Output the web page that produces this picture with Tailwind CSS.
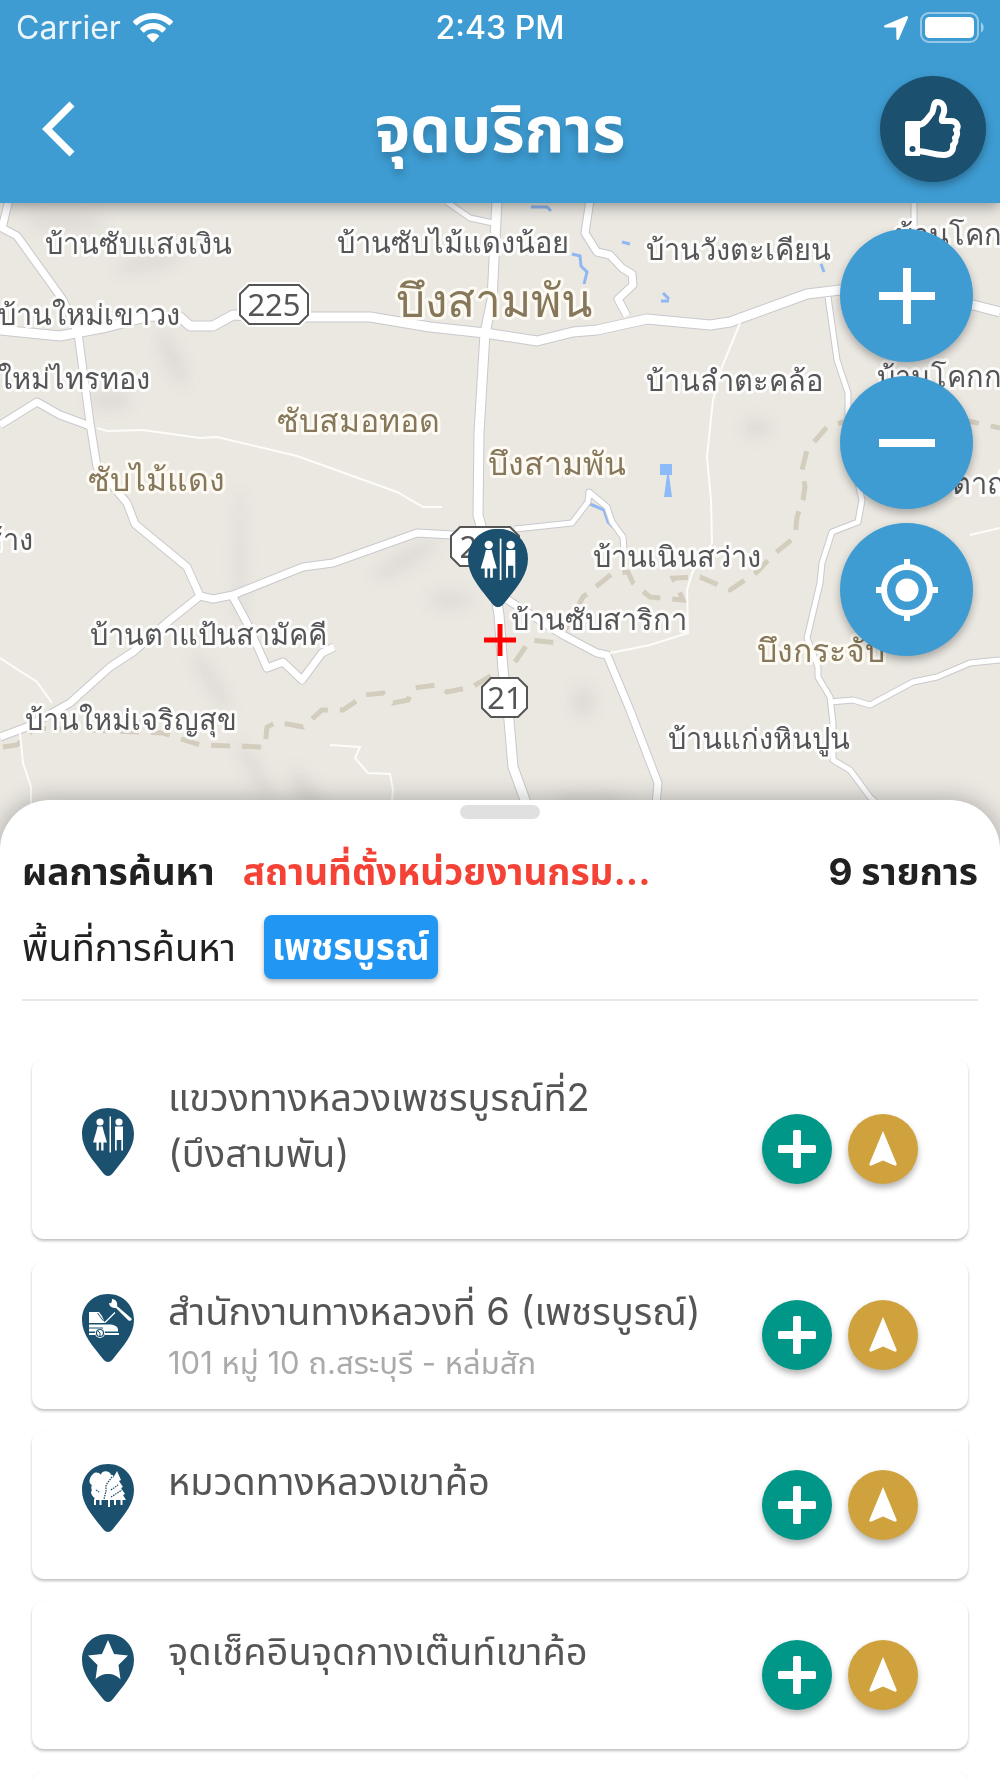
<!DOCTYPE html>
<html lang="th">
<head>
    <meta charset="UTF-8">
    <meta name="viewport" content="width=device-width, initial-scale=1.0">
    <title>จุดบริการ</title>
    <script src="https://cdn.jsdelivr.net/npm/@tailwindcss/browser@4"></script>
</head>
<body class="h-screen overflow-hidden bg-white font-['Inter','Noto_Sans_Thai','Noto_Sans',sans-serif] text-[#212121]">

    <!-- icon sprites -->
    <svg class="hidden" aria-hidden="true">
        <symbol id="pin" viewBox="0 0 52 68">
            <path fill="#1b506e" d="M26 0C11 0 0 11 0 26c0 15 11 26 21 39 3 4 7 4 10 0 10-13 21-24 21-39C52 11 41 0 26 0z"/>
        </symbol>
        <symbol id="pin-restroom" viewBox="0 0 52 68">
            <use href="#pin"/>
            <g fill="#fff">
                <circle cx="18" cy="14" r="3.6"/>
                <path d="M15.500 18.500h5l1.500 6 3 10h-3.500v8h-2.300v-8h-2.400v8h-2.300v-8H11l3-10z"/>
                <path d="M27.500 8.500h1.500v36h-1.500z"/>
                <circle cx="37" cy="14" r="3.600"/>
                <path d="M33 18.500h8v24h-1.700V32h-4.600v10.500H33z"/>
            </g>
        </symbol>
        <symbol id="pin-repair" viewBox="0 0 52 68">
            <use href="#pin"/>
            <g fill="#fff">
                <path d="M7 18h10l3 4 3 7H7z"/>
                <path d="M7 30.500h20c5 0 9 2 9 5v2H7zM7 39h6.500v2H7zM22.500 39H37v2H22.500z"/>
                <circle cx="18" cy="39" r="5"/>
                <path d="M27 9c2 1 3 0 3-4 4 0 6 4 5 7l14 12c2 2-1 4-3 2L34 14c-4 0-7-2-7-5z"/>
            </g>
            <path d="M14.500 19.500l6 6.500M23 28.500l10-10M7 34.500h12" stroke="#fff" stroke-width="1.300" fill="none"/>
            <path d="M15.500 19l6 8M7 34h14" stroke="#1b506e" stroke-width="1"/>
            <circle cx="18" cy="39" r="3.500" fill="none" stroke="#1b506e" stroke-width="1.200"/>
            <path d="M16 37l2 2v3" stroke="#1b506e" stroke-width="1" fill="none"/>
        </symbol>
        <symbol id="pin-park" viewBox="0 0 52 68">
            <use href="#pin"/>
            <path fill="#fff" d="M11 10c3-3 7-1 8 1 0-5 9-5 10 0 1-1 3 0 2 3l4-7 4 9-2 1 4 6-2 1 4 6-2 1 3 5H13c0-3-4-4-4-8 2-2-1-4 1-7-3-1-4-6 1-11z"/>
            <path stroke="#fff" stroke-width="2" d="M13 35v6M18.500 35v6M27 35v8M33 35v6M39.500 35v6"/>
            <path stroke="#1b506e" stroke-width="1.300" stroke-dasharray="1.500 1" fill="none" d="M30 13l-6 8v6l-2 8M29 26l7-5M29 33l11-7M14 26l3 2"/>
        </symbol>
        <symbol id="pin-star" viewBox="0 0 52 68">
            <use href="#pin"/>
            <path fill="#fff" d="M26 6l6 14 14 1.500L36.500 31l2 14.500C33 38 19 38 13.500 45.500L15.500 31 6 21.500 20 20z"/>
        </symbol>
        <symbol id="add" viewBox="0 0 38 38">
            <path fill="#fff" d="M16.500 0h5a1.500 1.500 0 0 1 1.500 1.500V15h13.500a1.500 1.500 0 0 1 1.500 1.500v5a1.500 1.500 0 0 1-1.500 1.500H23v13.500a1.500 1.500 0 0 1-1.500 1.500h-5a1.500 1.500 0 0 1-1.500-1.500V23H1.500A1.500 1.500 0 0 1 0 21.500v-5A1.500 1.500 0 0 1 1.500 15H15V1.500A1.500 1.500 0 0 1 16.500 0z"/>
        </symbol>
        <symbol id="navigate" viewBox="0 0 28 36">
            <path fill="#fff" d="M14 0L27.500 32.500c.6 1.500-.5 2.500-2 2L14 29.500 2.500 34.500c-1.500.5-2.600-.5-2-2z"/>
        </symbol>
    </svg>

    <div class="flex h-full flex-col">
        <!-- header -->
        <header class="relative z-10 shrink-0 bg-[#3e9cd2] text-white shadow-[0_3px_14px_rgba(0,0,0,0.4)]">
            <div class="grid h-[55px] grid-cols-3 items-center px-4">
                <div class="flex items-center gap-3">
                    <span class="text-[32px] leading-8 text-white/90">Carrier</span>
                    <svg class="h-[30px] w-10" viewBox="0 0 40 30" fill="#fff">
                        <path d="M20 0C12.500 0 5.500 3 .3 8c-.4.400-.4 1 0 1.400l2.600 2.700c.4.400 1 .4 1.400 0A22.500 22.500 0 0 1 20 6c6 0 11.500 2.300 15.700 6.100.4.400 1 .4 1.400 0l2.600-2.700c.4-.4.4-1 0-1.400C34.500 3 27.500 0 20 0z"/>
                        <path d="M20 10c-4.900 0-9.300 1.900-12.600 5-.4.400-.4 1 0 1.400l2.700 2.800c.4.400 1 .4 1.400 0 2.300-2 5.200-3.200 8.500-3.200s6.200 1.200 8.500 3.200c.4.400 1 .4 1.400 0l2.700-2.800c.4-.4.4-1 0-1.400-3.300-3.100-7.700-5-12.600-5z"/>
                        <path d="M20 20.200c-2.200 0-4.200.8-5.700 2.100-.4.400-.4 1 0 1.400l5 5.200c.4.400 1 .4 1.400 0l5-5.200c.4-.4.4-1 0-1.400-1.500-1.300-3.500-2.100-5.700-2.100z"/>
                    </svg>
                </div>
                <span class="text-center text-[32px] font-medium leading-8">2:43 PM</span>
                <div class="flex items-center justify-end gap-3">
                    <svg class="h-6 w-6" viewBox="0 0 24 24" fill="#fff"><path d="M22 .2L.8 9.300c-1.300.6-1 2.200.4 2.200l11 .1.200 11.200c0 1.400 1.800 1.700 2.400.4L23.900 2C24.400.8 23.200-.3 22 .2z"/></svg>
                    <svg class="h-[31px] w-16" viewBox="0 0 64 31">
                        <rect x="1" y="1" width="57" height="29" rx="8" fill="none" stroke="#fff" stroke-opacity=".45" stroke-width="2"/>
                        <rect x="5" y="5" width="49" height="21" rx="4.500" fill="#fff"/>
                        <path d="M61 10.500c3.500 1.500 3.500 8.500 0 10z" fill="#fff" fill-opacity=".5"/>
                    </svg>
                </div>
            </div>
            <div class="grid h-[148px] grid-cols-[1fr_auto_1fr] items-center px-[14px]">
                <button type="button" aria-label="กลับ" class="w-20 pl-[26px]">
                    <svg class="h-14 w-9" viewBox="0 0 36 56"><path d="M32 3L7 28l25 25" fill="none" stroke="#fff" stroke-width="7"/></svg>
                </button>
                <h1 class="text-[64px] font-bold leading-[80px] text-shadow-[0_6px_8px_rgba(0,0,0,0.2)]">จุดบริการ</h1>
                <button type="button" aria-label="ถูกใจ" class="flex size-[106px] items-center justify-center justify-self-end rounded-full bg-[#1b506e] shadow-[0_4px_8px_rgba(0,0,0,0.3)]">
                    <svg class="h-[60px] w-14" viewBox="0 0 56 60">
                        <path fill="#fff" fill-rule="evenodd" d="M2 22h13v35H2a2 2 0 0 1-2-2V24a2 2 0 0 1 2-2zM7.500 47a3 3 0 1 0 0 6 3 3 0 0 0 0-6z"/>
                        <path fill="none" stroke="#fff" stroke-width="6" stroke-linejoin="round" d="M13 26c7 0 11-9 14-12 2-3 1-11 5-11 5 0 8 4 7 10-1 4-3 6-2 9h9c7 0 8 7 5 9 2 3 1 7-1 8 1 3 0 6-2 7 1 6-3 10-9 10-12 0-13-3-26-4"/>
                    </svg>
                </button>
            </div>
        </header>

        <!-- map -->
        <main class="relative h-[647px] shrink-0 overflow-hidden bg-[#ebe8e2]">
            <svg class="h-full w-full" viewBox="0 203 1000 647" preserveAspectRatio="xMidYMid slice" role="img" aria-label="แผนที่">
                <defs>
                    <filter id="soft" x="-50%" y="-50%" width="200%" height="200%"><feGaussianBlur stdDeviation="7"/></filter>
                    <g id="major" fill="none" stroke-linejoin="round">
                        <path d="M0 330L60 336 107 327 150 316 180 317 190 326H213L233 315 270 317H370L430 327 485 333 537 341 573 332 597 330 647 319 710 325 730 322 807 294 840 290 900 295 973 305 1000 312"/>
                        <path d="M497 200L492 300 485 333 479 433 478 515 490 560 499 615 503 670 509 720 513 767 525 800 535 850"/>
                    </g>
                    <g id="minor" fill="none" stroke-linejoin="round">
                        <path d="M9 200L2 228 17 236 63 300 78 333 90 423 97 467 127 503 135 524 187 567 200 596 213 599 233 595 303 567 333 563 417 533 470 536"/>
                        <path d="M200 596L170 620 133 652 110 667 70 703 27 727 0 737"/>
                        <path d="M233 597L247 623 267 668 283 662 302 680 322 653 334 647"/>
                        <path d="M0 425L37 402 60 415 90 426"/>
                        <path d="M500 595L563 635 597 653 607 655 630 710 658 783 652 850"/>
                        <path d="M590 200L585 233 597 252 610 255 622 268 632 274 633 285 618 299 627 316"/>
                    </g>
                    <g id="lane" fill="none" stroke-linejoin="round">
                        <path d="M447 202L470 218 493 223"/>
                        <path d="M828 297L837 360 848 393 848 440 862 500 858 522 832 532 822 563 820 583 807 638 818 667 818 677 830 697 833 723 833 760 850 770 870 797 890 815"/>
                        <path d="M830 702L853 700 870 705 913 682 937 677 970 663 1000 660"/>
                        <path d="M515 529L572 523 588 502 589 492 607 507 612 522 623 537 624 550"/>
                        <path d="M914 200V250"/>
                    </g>
                </defs>

                <!-- terrain shading -->
                <g filter="url(#soft)" fill="#8d8c86" fill-opacity=".13">
                    <ellipse cx="150" cy="262" rx="34" ry="9" transform="rotate(-12 150 262)"/>
                    <ellipse cx="65" cy="222" rx="40" ry="9"/>
                    <ellipse cx="172" cy="358" rx="9" ry="30" transform="rotate(-25 172 358)"/>
                    <ellipse cx="110" cy="400" rx="22" ry="10"/>
                    <ellipse cx="240" cy="560" rx="5" ry="70"/>
                    <ellipse cx="212" cy="682" rx="7" ry="34" transform="rotate(-32 212 682)"/>
                    <ellipse cx="255" cy="770" rx="7" ry="32" transform="rotate(-32 255 770)"/>
                    <ellipse cx="305" cy="790" rx="10" ry="24" transform="rotate(-32 305 790)"/>
                    <ellipse cx="405" cy="560" rx="36" ry="9" transform="rotate(-30 405 560)"/>
                    <ellipse cx="450" cy="600" rx="22" ry="9"/>
                    <ellipse cx="583" cy="702" rx="12" ry="16"/>
                    <ellipse cx="757" cy="428" rx="14" ry="10"/>
                    <ellipse cx="590" cy="800" rx="36" ry="8"/>
                </g>

                <!-- district boundary -->
                <path fill="none" stroke="#d3cdbe" stroke-width="5" stroke-dasharray="19 12" d="M3 747L17 745 35 728 163 733 200 745 265 747 267 727 277 722 303 727 322 710 343 710 365 695 383 693 393 703 408 700 413 688 437 685 447 692 472 687 497 672M515 662L530 640 558 643 583 597 613 573 628 572 633 583 650 597 683 600 673 578 700 577 730 590 757 572 773 555 795 537 797 517 803 500 805 487 802 470 807 450 827 427 843 422 908 412 973 422 1000 428"/>

                <!-- water -->
                <g fill="none" stroke="#8fb8f3" stroke-width="3">
                    <path d="M531 207h16l4 4M572 254l8 2 1 10 6 6-3 12M622 242l8 2M663 293l6 6M661 301h8M821 264l3 8M590 504l14 6 4 12 6 6"/>
                </g>
                <path fill="#8dbaf8" d="M660 464h12v11h-3l3 22h-8l3-22h-7z"/>

                <!-- roads: casing first, then fill -->
                <use href="#lane" stroke="#c9c8cc" stroke-width="7"/>
                <use href="#minor" stroke="#c9c8cc" stroke-width="9"/>
                <use href="#major" stroke="#c9c8cc" stroke-width="11"/>
                <g fill="none" stroke="#fdfcf8" stroke-width="2">
                    <path d="M97 428L107 431 143 430 200 438 217 437 297 456 397 492 423 507 442 507"/>
                    <path d="M740 323L722 367 713 400 707 457 711 500 712 543 692 573 687 590 688 633 650 645 610 653"/>
                    <path d="M0 658L37 682 52 703M20 733L23 763 31 787V805M330 745L360 747 355 758 368 773 390 774 393 790 391 810M970 535L1000 528"/>
                </g>
                <use href="#lane" stroke="#fff" stroke-width="5"/>
                <use href="#minor" stroke="#fff" stroke-width="7"/>
                <use href="#major" stroke="#fff" stroke-width="9"/>

                <!-- route shields -->
                <g fill="#fff" stroke="#555" stroke-width="2">
                    <path stroke="#fff" stroke-width="6" d="M249 285h50l9 9v21l-9 9h-50l-9-9v-21z"/>
                    <path d="M249 285h50l9 9v21l-9 9h-50l-9-9v-21z"/>
                    <path d="M460 527h50l9 9v21l-9 9h-50l-9-9v-21z"/>
                    <path d="M491 678h27l9 9v21l-9 9h-27l-9-9v-21z"/>
                </g>
                <g class="font-['Noto_Sans',sans-serif]" font-size="31" fill="#555" text-anchor="middle">
                    <text x="274" y="316">225</text>
                    <text x="486" y="558">225</text>
                    <text x="505" y="709">21</text>
                </g>

                <!-- place names -->
                <g class="font-['Noto_Sans',sans-serif] [paint-order:stroke]" font-size="29" fill="#555558" stroke="#fff" stroke-opacity=".85" stroke-width="6" stroke-linejoin="round">
                    <text x="45" y="254">บ้านซับแสงเงิน</text>
                    <text x="337" y="253">บ้านซับไม้แดงน้อย</text>
                    <text x="646" y="260">บ้านวังตะเคียน</text>
                    <text x="895" y="245">บ้านโคกกรวด</text>
                    <text x="-2" y="325">บ้านใหม่เขาวง</text>
                    <text x="-2" y="389">ใหม่ไทรทอง</text>
                    <text x="646" y="391">บ้านลำตะคล้อ</text>
                    <text x="877" y="387">บ้านโคกกลาง</text>
                    <text x="952" y="494">ตาถ่าย</text>
                    <text x="-17" y="550">ช้าง</text>
                    <text x="593" y="567">บ้านเนินสว่าง</text>
                    <text x="511" y="630">บ้านซับสาริกา</text>
                    <text x="90" y="645">บ้านตาแป้นสามัคคี</text>
                    <text x="25" y="730">บ้านใหม่เจริญสุข</text>
                    <text x="668" y="749">บ้านแก่งหินปูน</text>
                </g>
                <g class="font-['Noto_Sans',sans-serif] [paint-order:stroke]" font-size="32" fill="#86775a" stroke="#fffdf5" stroke-opacity=".85" stroke-width="6" stroke-linejoin="round">
                    <text x="277" y="432">ซับสมอทอด</text>
                    <text x="88" y="491">ซับไม้แดง</text>
                    <text x="488" y="475">บึงสามพัน</text>
                    <text x="757" y="662">บึงกระจับ</text>
                    <text x="396" y="317" font-size="46">บึงสามพัน</text>
                </g>

                <!-- selected place and map centre -->
                <use href="#pin-restroom" x="468" y="527" width="60" height="82"/>
                <path d="M484 640h32M500 624v32" stroke="#f00" stroke-width="5"/>
            </svg>

            <div class="absolute right-[27px] top-[26px] flex flex-col gap-[14px]">
                <button type="button" aria-label="ขยาย" class="flex size-[133px] items-center justify-center rounded-full bg-[#3e9cd2] shadow-[0_4px_8px_rgba(0,0,0,0.3)]">
                    <svg class="size-14" viewBox="0 0 56 56" stroke="#fff" stroke-width="8"><path d="M0 28h56M28 0v56"/></svg>
                </button>
                <button type="button" aria-label="ย่อ" class="flex size-[133px] items-center justify-center rounded-full bg-[#3e9cd2] shadow-[0_4px_8px_rgba(0,0,0,0.3)]">
                    <svg class="size-14" viewBox="0 0 56 56" stroke="#fff" stroke-width="8"><path d="M0 28h56"/></svg>
                </button>
                <button type="button" aria-label="ตำแหน่งของฉัน" class="flex size-[133px] items-center justify-center rounded-full bg-[#3e9cd2] shadow-[0_4px_8px_rgba(0,0,0,0.3)]">
                    <svg class="size-16" viewBox="0 0 64 64" fill="none" stroke="#fff" stroke-width="6">
                        <circle cx="32" cy="32" r="23"/>
                        <path d="M32 1v9M32 54v9M1 32h9M54 32h9"/>
                        <circle cx="32" cy="32" r="11.500" fill="#fff" stroke="none"/>
                    </svg>
                </button>
            </div>
        </main>

        <!-- results sheet -->
        <section class="relative z-10 -mt-[50px] flex min-h-0 flex-1 flex-col overflow-hidden rounded-t-[50px] bg-white shadow-[0_0_24px_rgba(0,0,0,0.3)]">
            <div class="mx-auto mt-[5px] h-[14px] w-20 shrink-0 rounded-full bg-[#e0e0e0]"></div>

            <div class="mx-[22px] shrink-0 border-b-2 border-[#e8e8e8] pb-5 pt-[29px]">
                <div class="flex h-12 items-center text-[37px] font-bold leading-[48px]">
                    <h2>ผลการค้นหา</h2>
                    <span class="ml-7 whitespace-nowrap text-[#f44336]">สถานที่ตั้งหน่วยงานกรม...</span>
                    <span class="ml-auto">9 รายการ</span>
                </div>
                <div class="mt-[19px] flex h-16 items-center text-[38px] leading-[48px]">
                    <span>พื้นที่การค้นหา</span>
                    <button type="button" class="ml-7 h-16 rounded-lg bg-[#2196f3] px-2 text-[37px] font-bold text-white shadow-[0_3px_5px_rgba(0,0,0,0.3)]">เพชรบูรณ์</button>
                </div>
            </div>

            <ul class="flex flex-col gap-[22px] px-8 pt-[58px] text-[#555]">
                <li class="flex min-h-[148px] shrink-0 items-center rounded-xl bg-white py-[10px] pl-[50px] pr-[50px] shadow-[0_2px_3px_rgba(0,0,0,0.25)]">
                    <svg class="mb-[14px] h-[68px] w-[52px] shrink-0"><use href="#pin-restroom"/></svg>
                    <div class="ml-[34px] flex-1">
                        <h3 class="text-[38px] leading-[56px]">แขวงทางหลวงเพชรบูรณ์ที่2<br>(บึงสามพัน)</h3>
                        <p class="h-12"></p>
                    </div>
                    <div class="flex gap-4">
                        <button type="button" aria-label="เพิ่ม" class="flex size-[70px] items-center justify-center rounded-full bg-[#009688] shadow-[0_4px_6px_rgba(0,0,0,0.3)]"><svg class="size-[38px]"><use href="#add"/></svg></button>
                        <button type="button" aria-label="นำทาง" class="flex size-[70px] items-center justify-center rounded-full bg-[#cfa23d] shadow-[0_4px_6px_rgba(0,0,0,0.3)]"><svg class="h-9 w-7"><use href="#navigate"/></svg></button>
                    </div>
                </li>
                <li class="flex min-h-[148px] shrink-0 items-center rounded-xl bg-white py-[10px] pl-[50px] pr-[50px] shadow-[0_2px_3px_rgba(0,0,0,0.25)]">
                    <svg class="mb-[14px] h-[68px] w-[52px] shrink-0"><use href="#pin-repair"/></svg>
                    <div class="ml-[34px] flex-1">
                        <h3 class="text-[38px] leading-[56px]">สำนักงานทางหลวงที่ 6 (เพชรบูรณ์)</h3>
                        <p class="h-12 text-[31px] leading-[48px] text-[#aaa]">101 หมู่ 10 ถ.สระบุรี - หล่มสัก</p>
                    </div>
                    <div class="flex gap-4">
                        <button type="button" aria-label="เพิ่ม" class="flex size-[70px] items-center justify-center rounded-full bg-[#009688] shadow-[0_4px_6px_rgba(0,0,0,0.3)]"><svg class="size-[38px]"><use href="#add"/></svg></button>
                        <button type="button" aria-label="นำทาง" class="flex size-[70px] items-center justify-center rounded-full bg-[#cfa23d] shadow-[0_4px_6px_rgba(0,0,0,0.3)]"><svg class="h-9 w-7"><use href="#navigate"/></svg></button>
                    </div>
                </li>
                <li class="flex min-h-[148px] shrink-0 items-center rounded-xl bg-white py-[10px] pl-[50px] pr-[50px] shadow-[0_2px_3px_rgba(0,0,0,0.25)]">
                    <svg class="mb-[14px] h-[68px] w-[52px] shrink-0"><use href="#pin-park"/></svg>
                    <div class="ml-[34px] flex-1">
                        <h3 class="text-[38px] leading-[56px]">หมวดทางหลวงเขาค้อ</h3>
                        <p class="h-12"></p>
                    </div>
                    <div class="flex gap-4">
                        <button type="button" aria-label="เพิ่ม" class="flex size-[70px] items-center justify-center rounded-full bg-[#009688] shadow-[0_4px_6px_rgba(0,0,0,0.3)]"><svg class="size-[38px]"><use href="#add"/></svg></button>
                        <button type="button" aria-label="นำทาง" class="flex size-[70px] items-center justify-center rounded-full bg-[#cfa23d] shadow-[0_4px_6px_rgba(0,0,0,0.3)]"><svg class="h-9 w-7"><use href="#navigate"/></svg></button>
                    </div>
                </li>
                <li class="flex min-h-[148px] shrink-0 items-center rounded-xl bg-white py-[10px] pl-[50px] pr-[50px] shadow-[0_2px_3px_rgba(0,0,0,0.25)]">
                    <svg class="mb-[14px] h-[68px] w-[52px] shrink-0"><use href="#pin-star"/></svg>
                    <div class="ml-[34px] flex-1">
                        <h3 class="text-[38px] leading-[56px]">จุดเช็คอินจุดกางเต๊นท์เขาค้อ</h3>
                        <p class="h-12"></p>
                    </div>
                    <div class="flex gap-4">
                        <button type="button" aria-label="เพิ่ม" class="flex size-[70px] items-center justify-center rounded-full bg-[#009688] shadow-[0_4px_6px_rgba(0,0,0,0.3)]"><svg class="size-[38px]"><use href="#add"/></svg></button>
                        <button type="button" aria-label="นำทาง" class="flex size-[70px] items-center justify-center rounded-full bg-[#cfa23d] shadow-[0_4px_6px_rgba(0,0,0,0.3)]"><svg class="h-9 w-7"><use href="#navigate"/></svg></button>
                    </div>
                </li>
                <li class="min-h-[148px] shrink-0 rounded-xl bg-white shadow-[0_2px_3px_rgba(0,0,0,0.25)]"></li>
            </ul>
        </section>
    </div>
</body>
</html>
